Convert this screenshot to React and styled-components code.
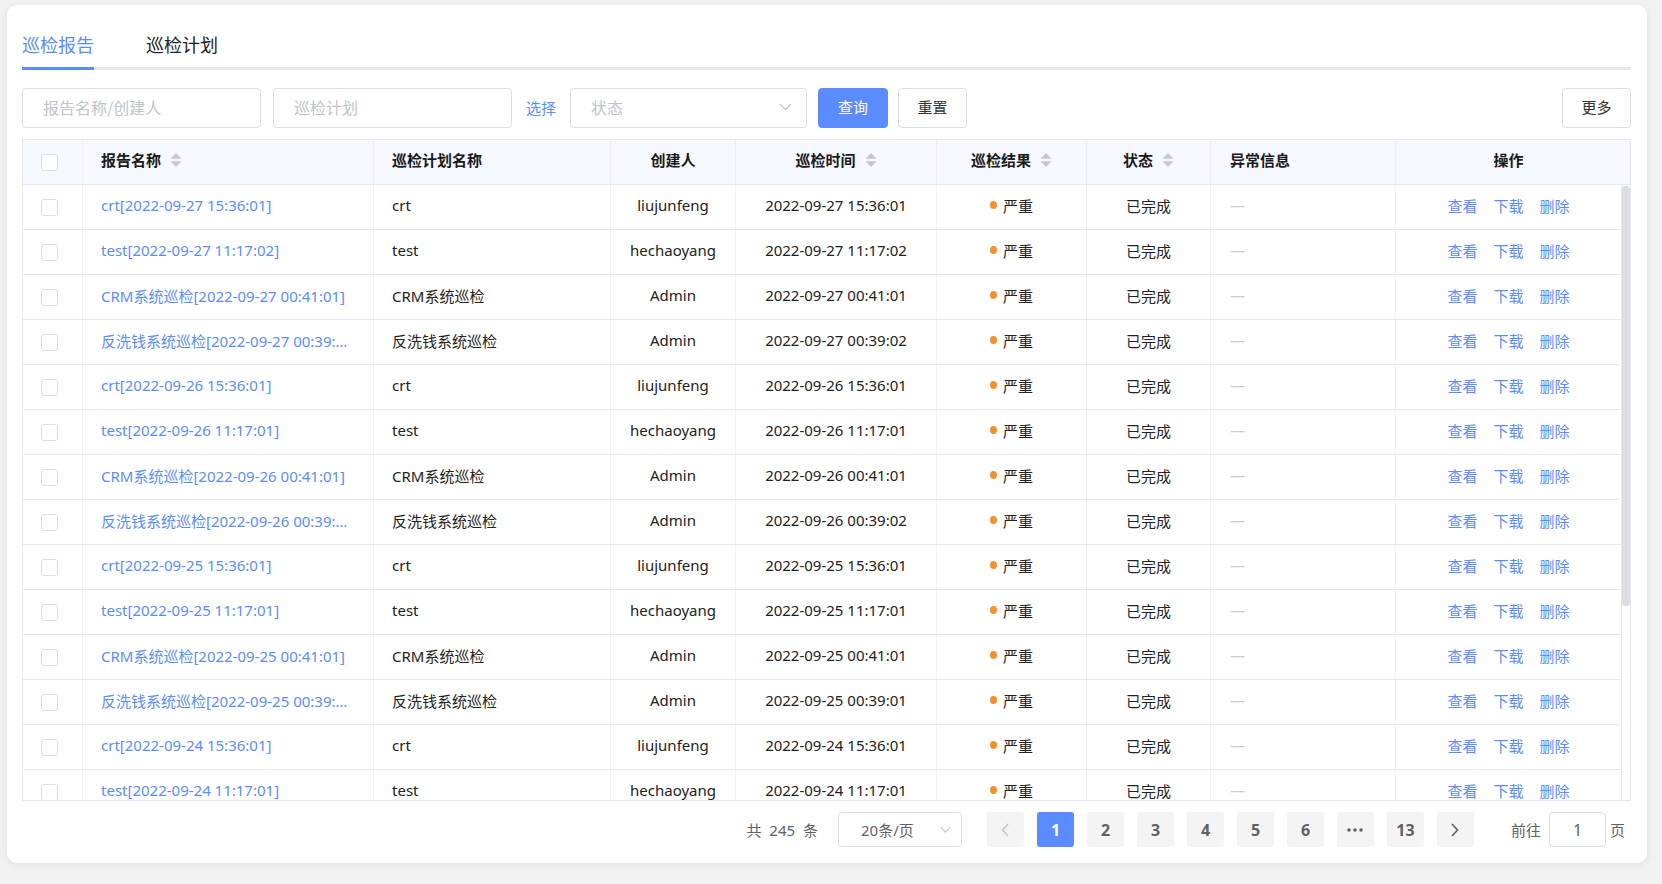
import React from "react";
import styled, { createGlobalStyle } from "styled-components";

const BLUE = "#5b8cff";

const Global = createGlobalStyle`
  html, body { margin: 0; padding: 0; background: #f2f2f2; }
  body { font-family: "Noto Sans", "Noto Sans CJK SC", sans-serif; color: #222; }
  * { box-sizing: border-box; }
`;

const Page = styled.div`
  padding: 5px 15px 21px 7px;
`;

const Card = styled.div`
  background: #fff;
  border-radius: 10px;
  box-shadow: 0 2px 8px rgba(0, 0, 0, 0.07);
  height: 858px;
  padding: 27px 16px 16px 15px;
  display: flex;
  flex-direction: column;
`;

const TabBar = styled.div`
  display: flex;
  gap: 52px;
  border-bottom: 3px solid #e4e7ed;
`;

const Tab = styled.div`
  font-size: 18px;
  line-height: 24px;
  padding-bottom: 11px;
  margin-bottom: -3px;
  border-bottom: 3px solid ${(p) => (p.$active ? BLUE : "transparent")};
  color: ${(p) => (p.$active ? BLUE : "#222")};
  font-family: "Noto Sans CJK SC", sans-serif;
`;

const FilterRow = styled.div`
  margin-top: 18px;
  height: 40px;
  display: flex;
  align-items: center;
`;

const TextInput = styled.div`
  width: ${(p) => p.$w}px;
  height: 40px;
  margin-left: ${(p) => p.$ml || 0}px;
  border: 1px solid #dcdfe6;
  border-radius: 4px;
  padding: 0 14px 2px ${(p) => p.$pl || 20}px;
  display: flex;
  align-items: center;
  justify-content: space-between;
  font-size: 16px;
  color: #c0c4cc;
  font-family: "Noto Sans CJK SC", sans-serif;
`;

const LinkText = styled.span`
  margin-left: ${(p) => p.$ml || 0}px;
  padding-bottom: 2px;
  color: ${BLUE};
  font-size: 15px;
  font-family: "Noto Sans CJK SC", sans-serif;
  cursor: pointer;
`;

const Button = styled.button`
  height: 40px;
  width: ${(p) => p.$w}px;
  margin-left: ${(p) => p.$ml || 0}px;
  border-radius: 4px;
  border: 1px solid ${(p) => (p.$primary ? BLUE : "#dcdfe6")};
  background: ${(p) => (p.$primary ? BLUE : "#fff")};
  color: ${(p) => (p.$primary ? "#fff" : "#333")};
  font-size: 15px;
  font-family: "Noto Sans CJK SC", sans-serif;
  padding: 0 0 3px;
  cursor: pointer;
`;

const Spacer = styled.div`
  flex: 1;
`;

const TableWrap = styled.div`
  margin-top: 11px;
  border: 1px solid #e6e8eb;
  display: flex;
  flex-direction: column;
`;

const COLS = "60px 291px 237px 125px 201px 150px 124px 185px 225px";

const HeadRow = styled.div`
  display: grid;
  grid-template-columns: ${COLS} 9px;
  background: #f5f8fe;
  border-bottom: 1px solid #e6e8eb;
  height: 45px;
`;

const HeadCell = styled.div`
  display: flex;
  align-items: center;
  justify-content: ${(p) => (p.$left ? "flex-start" : "center")};
  padding: 0 0 5px ${(p) => (p.$left ? p.$pl || 18 : 0)}px;
  border-right: ${(p) => (p.$noBorder ? "none" : "1px solid #ebeef3")};
  font-weight: 700;
  font-size: 15px;
  color: #1a1a1a;
  font-family: "Noto Sans CJK SC", sans-serif;
  gap: 9px;
`;

const BodyArea = styled.div`
  height: 615px;
  display: flex;
`;

const RowsViewport = styled.div`
  flex: 1;
  min-width: 0;
  overflow: hidden;
`;

const ScrollTrack = styled.div`
  width: 9px;
  flex: none;
  background: #fff;
  border-left: 1px solid #e6e8eb;
  padding-top: 1px;
`;

const ScrollThumb = styled.div`
  height: 420px;
  background: #dcdde0;
  border-radius: 3px;
`;

const Row = styled.div`
  display: grid;
  grid-template-columns: ${COLS};
  height: 45px;
  border-bottom: 1px solid #e6e8eb;
`;

const Cell = styled.div`
  display: flex;
  align-items: center;
  justify-content: ${(p) => (p.$left ? "flex-start" : "center")};
  padding: 0 ${(p) => (p.$left ? 18 : 0)}px 4px ${(p) => (p.$left ? p.$pl || 18 : 0)}px;
  border-right: ${(p) => (p.$noBorder ? "none" : "1px solid #f0f1f4")};
  font-size: 15px;
  color: #222;
  min-width: 0;
  gap: ${(p) => p.$gap || 0}px;
`;

const CheckCell = styled.div`
  display: flex;
  align-items: center;
  padding-left: 18px;
  border-right: 1px solid #f0f1f4;
`;

const Checkbox = styled.span`
  width: 17px;
  height: 17px;
  border: 1px solid #dcdfe6;
  border-radius: 3px;
  background: #fff;
  display: inline-block;
`;

const NameLink = styled.span`
  color: ${BLUE};
  white-space: nowrap;
  overflow: hidden;
  text-overflow: ellipsis;
`;

const Dot = styled.span`
  width: 7px;
  height: 8px;
  border-radius: 50%;
  background: #f5902a;
  display: inline-block;
`;

const Dash = styled.span`
  color: #c8ccd3;
`;

const Action = styled.span`
  color: ${BLUE};
  cursor: pointer;
`;

const Pager = styled.div`
  margin-top: 11px;
  height: 35px;
  display: flex;
  align-items: center;
  justify-content: flex-end;
  padding-right: 6px;
  color: #606266;
  font-size: 15px;
  font-family: "Noto Sans", "Noto Sans CJK SC", sans-serif;
`;

const PagerText = styled.span`
  margin-left: ${(p) => p.$ml || 0}px;
  color: #606266;
  word-spacing: 4px;
`;

const SizeSelect = styled.div`
  margin-left: 20px;
  width: 124px;
  height: 35px;
  border: 1px solid #dcdfe6;
  border-radius: 4px;
  display: flex;
  align-items: center;
  justify-content: space-between;
  padding: 0 10px 0 22px;
  color: #606266;
`;

const PageList = styled.div`
  margin-left: 25px;
  display: flex;
  gap: 13px;
`;

const PageBtn = styled.div`
  width: 37px;
  height: 35px;
  border-radius: 3px;
  display: flex;
  align-items: center;
  justify-content: center;
  background: ${(p) => (p.$active ? BLUE : "#f4f4f5")};
  color: ${(p) => (p.$active ? "#fff" : "#606266")};
  font-weight: 700;
  font-size: 16px;
`;

const JumpInput = styled.div`
  margin-left: 8px;
  width: 57px;
  height: 35px;
  border: 1px solid #dcdfe6;
  border-radius: 4px;
  display: flex;
  align-items: center;
  justify-content: center;
  color: #606266;
  font-size: 16px;
`;

const SortIcon = () => (
  <svg width="12" height="16" viewBox="0 0 12 16">
    <polygon points="0.5,6.8 6,1 11.5,6.8" fill="#c4c7cf" />
    <polygon points="0.5,9.2 6,15 11.5,9.2" fill="#c4c7cf" />
  </svg>
);

const Chevron = ({ color = "#c0c4cc", w = 13 }) => (
  <svg width={w} height="8" viewBox="0 0 13 8">
    <polyline points="1,1 6.5,6.5 12,1" fill="none" stroke={color} strokeWidth="1.3" />
  </svg>
);

const Arrow = ({ dir, color }) => (
  <svg width="8" height="14" viewBox="0 0 8 14">
    <polyline
      points={dir === "left" ? "7,1 1.5,7 7,13" : "1,1 6.5,7 1,13"}
      fill="none"
      stroke={color}
      strokeWidth="1.6"
    />
  </svg>
);

const Dots = () => (
  <svg width="16" height="4" viewBox="0 0 16 4">
    <circle cx="2" cy="2" r="1.8" fill="#606266" />
    <circle cx="8" cy="2" r="1.8" fill="#606266" />
    <circle cx="14" cy="2" r="1.8" fill="#606266" />
  </svg>
);

const days = [
  { d: "27", t: "02", f: "02" },
  { d: "26", t: "01", f: "02" },
  { d: "25", t: "01", f: "01" },
  { d: "24", t: "01", f: "01" },
];

const rows = [];
days.forEach(({ d, t, f }) => {
  rows.push({ name: `crt[2022-09-${d} 15:36:01]`, plan: "crt", user: "liujunfeng", time: `2022-09-${d} 15:36:01` });
  rows.push({ name: `test[2022-09-${d} 11:17:${t}]`, plan: "test", user: "hechaoyang", time: `2022-09-${d} 11:17:${t}` });
  rows.push({ name: `CRM系统巡检[2022-09-${d} 00:41:01]`, plan: "CRM系统巡检", user: "Admin", time: `2022-09-${d} 00:41:01` });
  rows.push({ name: `反洗钱系统巡检[2022-09-${d} 00:39:${f}]`, plan: "反洗钱系统巡检", user: "Admin", time: `2022-09-${d} 00:39:${f}` });
});
const visibleRows = rows.slice(0, 14);

export default function App() {
  return (
    <Page>
      <Global />
      <Card>
        <TabBar>
          <Tab $active>巡检报告</Tab>
          <Tab>巡检计划</Tab>
        </TabBar>

        <FilterRow>
          <TextInput $w={239}>报告名称/创建人</TextInput>
          <TextInput $w={239} $ml={12}>巡检计划</TextInput>
          <LinkText $ml={14}>选择</LinkText>
          <TextInput $w={237} $ml={14}>
            <span>状态</span>
            <Chevron />
          </TextInput>
          <Button $primary $w={70} $ml={11}>查询</Button>
          <Button $w={69} $ml={10}>重置</Button>
          <Spacer />
          <Button $w={69}>更多</Button>
        </FilterRow>

        <TableWrap>
          <HeadRow>
            <CheckCell>
              <Checkbox />
            </CheckCell>
            <HeadCell $left>
              报告名称
              <SortIcon />
            </HeadCell>
            <HeadCell $left>巡检计划名称</HeadCell>
            <HeadCell>创建人</HeadCell>
            <HeadCell>
              巡检时间
              <SortIcon />
            </HeadCell>
            <HeadCell>
              巡检结果
              <SortIcon />
            </HeadCell>
            <HeadCell>
              状态
              <SortIcon />
            </HeadCell>
            <HeadCell $left $pl={19}>异常信息</HeadCell>
            <HeadCell $noBorder>操作</HeadCell>
            <HeadCell $noBorder />
          </HeadRow>
          <BodyArea>
            <RowsViewport>
              {visibleRows.map((r, i) => (
                <Row key={i}>
                  <CheckCell>
                    <Checkbox />
                  </CheckCell>
                  <Cell $left>
                    <NameLink>{r.name}</NameLink>
                  </Cell>
                  <Cell $left>{r.plan}</Cell>
                  <Cell>{r.user}</Cell>
                  <Cell>{r.time}</Cell>
                  <Cell $gap={6}>
                    <Dot />
                    <span>严重</span>
                  </Cell>
                  <Cell>已完成</Cell>
                  <Cell $left $pl={19}>
                    <Dash>—</Dash>
                  </Cell>
                  <Cell $noBorder $gap={16}>
                    <Action>查看</Action>
                    <Action>下载</Action>
                    <Action>删除</Action>
                  </Cell>
                </Row>
              ))}
            </RowsViewport>
            <ScrollTrack>
              <ScrollThumb />
            </ScrollTrack>
          </BodyArea>
        </TableWrap>

        <Pager>
          <PagerText>共 245 条</PagerText>
          <SizeSelect>
            <span>20条/页</span>
            <Chevron w={11} />
          </SizeSelect>
          <PageList>
            <PageBtn>
              <Arrow dir="left" color="#c0c4cc" />
            </PageBtn>
            <PageBtn $active>1</PageBtn>
            <PageBtn>2</PageBtn>
            <PageBtn>3</PageBtn>
            <PageBtn>4</PageBtn>
            <PageBtn>5</PageBtn>
            <PageBtn>6</PageBtn>
            <PageBtn>
              <Dots />
            </PageBtn>
            <PageBtn>13</PageBtn>
            <PageBtn>
              <Arrow dir="right" color="#606266" />
            </PageBtn>
          </PageList>
          <PagerText $ml={37}>前往</PagerText>
          <JumpInput>1</JumpInput>
          <PagerText $ml={4}>页</PagerText>
        </Pager>
      </Card>
    </Page>
  );
}
